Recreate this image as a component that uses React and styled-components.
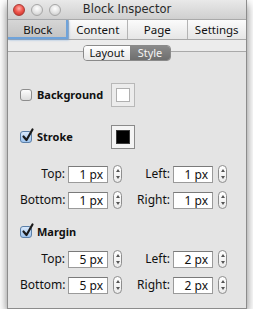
import React from "react";
import styled, { createGlobalStyle } from "styled-components";

const Global = createGlobalStyle`
  html, body {
    margin: 0;
    padding: 0;
    background: #fff;
  }
  body {
    font-family: "Noto Sans", "DejaVu Sans", sans-serif;
    color: #111;
    line-height: 1.2;
  }
`;

const Window = styled.div`
  width: 240px;
  height: 309px;
  margin-left: 7px;
  box-sizing: border-box;
  border: 1px solid #8c8c8c;
  border-top: none;
  background: #e4e4e4;
  box-shadow: 0 4px 9px rgba(0, 0, 0, 0.5);
  display: flex;
  flex-direction: column;
  overflow: hidden;
`;

const TitleBar = styled.div`
  height: 19px;
  flex: none;
  background: linear-gradient(#e9e9e9, #cfcfcf);
  display: flex;
  align-items: center;
  padding-left: 5px;
  gap: 6px;
  position: relative;
`;

const Light = styled.span`
  width: 12px;
  height: 12px;
  border-radius: 50%;
  box-sizing: border-box;
  border: 1px solid ${(p) => (p.$red ? "#a83a35" : "#a6a6a6")};
  background: ${(p) =>
    p.$red
      ? "radial-gradient(circle at 50% 35%, #ffb3ad 0%, #f0584f 45%, #c1281f 100%)"
      : "radial-gradient(circle at 50% 35%, #ffffff 0%, #e4e4e4 50%, #c2c2c2 100%)"};
`;

const Title = styled.div`
  position: absolute;
  left: 0;
  right: 0;
  top: 0;
  bottom: 0;
  display: flex;
  align-items: center;
  justify-content: center;
  font-family: "DejaVu Sans", sans-serif;
  font-size: 11.5px;
  color: #2a2a2a;
  pointer-events: none;
`;

const TabBar = styled.div`
  height: 19px;
  flex: none;
  display: grid;
  grid-template-columns: repeat(4, 1fr);
  border-top: 1px solid #a9a9a9;
  border-bottom: 1px solid #a9a9a9;
`;

const Tab = styled.div`
  display: flex;
  align-items: center;
  justify-content: center;
  font-size: 11.5px;
  color: #111;
  border-left: ${(p) => (p.$first ? "none" : "1px solid #b4b4b4")};
  background: ${(p) =>
    p.$active
      ? "linear-gradient(#d6d6d6, #c2c2c2)"
      : "linear-gradient(#fbfbfb, #e6e6e6)"};
  box-shadow: ${(p) =>
    p.$active ? "inset -2px -2px 0 #6fa3da, 1px 1px 2px rgba(90,150,220,0.6)" : "none"};
  position: relative;
  z-index: ${(p) => (p.$active ? 1 : 0)};
`;

const SegmentBar = styled.div`
  height: 24px;
  flex: none;
  display: flex;
  justify-content: center;
  align-items: flex-start;
  padding-top: 5px;
  box-sizing: border-box;
  background: linear-gradient(#ececec 0, #ececec 11px, #a9a9a9 11px, #a9a9a9 12px, #e4e4e4 12px);
`;

const Segmented = styled.div`
  display: flex;
  height: 14px;
  border: 1px solid #8a8a8a;
  border-radius: 4px;
  overflow: hidden;
`;

const Segment = styled.div`
  width: ${(p) => p.$w}px;
  display: flex;
  align-items: center;
  justify-content: center;
  font-size: 11px;
  color: ${(p) => (p.$on ? "#f4f4f4" : "#111")};
  background: ${(p) =>
    p.$on ? "linear-gradient(#8a8a8a, #6e6e6e)" : "linear-gradient(#ffffff, #e8e8e8)"};
`;

const Body = styled.div`
  padding: 19px 0 0 12px;
  display: flex;
  flex-direction: column;
`;

const CheckRow = styled.div`
  display: flex;
  align-items: center;
  height: ${(p) => p.$h || 24}px;
  margin-top: ${(p) => p.$mt || 0}px;
`;

const Box = styled.span`
  width: 12px;
  height: 12px;
  box-sizing: border-box;
  border: 1px solid #8d8d8d;
  border-radius: 3px;
  margin-right: 5px;
  position: relative;
  flex: none;
  background: ${(p) => (p.$checked ? "linear-gradient(#d8e8fb, #9ec4ee)" : "linear-gradient(#fdfdfd, #dcdcdc)")};
  border-color: ${(p) => (p.$checked ? "#5b7fa8" : "#8d8d8d")};
`;

const Tick = styled.svg`
  position: absolute;
  left: 0px;
  top: -4px;
  width: 13px;
  height: 14px;
  overflow: visible;
`;

const Bold = styled.span`
  font-weight: bold;
  font-size: 11px;
  width: ${(p) => p.$w}px;
`;

const Well = styled.span`
  width: 24px;
  height: 24px;
  box-sizing: border-box;
  border: 1px solid ${(p) => (p.$dark ? "#8a8a8a" : "#b8b8b8")};
  background: ${(p) => (p.$dark ? "#f4f4f4" : "#ececec")};
  display: flex;
  align-items: center;
  justify-content: center;
  &::after {
    content: "";
    width: 14px;
    height: 14px;
    box-sizing: border-box;
    border: 1px solid ${(p) => (p.$dark ? "#3a3a3a" : "#b0b0b0")};
    background: ${(p) => p.$fill};
  }
`;

const FieldRow = styled.div`
  display: flex;
  align-items: center;
  height: 18px;
  margin-top: ${(p) => p.$mt}px;
`;

const Pair = styled.div`
  display: flex;
  align-items: center;
  margin-left: ${(p) => p.$ml || 0}px;
`;

const Label = styled.span`
  width: ${(p) => p.$w}px;
  text-align: right;
  margin-right: 3px;
  font-size: 12px;
`;

const Field = styled.span`
  width: 40px;
  height: 17px;
  box-sizing: border-box;
  border: 1px solid #9a9a9a;
  border-top-color: #7a7a7a;
  background: #fff;
  text-align: right;
  padding-right: 4px;
  font-size: 12px;
  line-height: 15px;
  margin-right: 5px;
`;

const Stepper = styled.span`
  width: 9px;
  height: 18px;
  box-sizing: border-box;
  border: 1px solid #8e8e8e;
  border-radius: 5px;
  background: linear-gradient(#ffffff, #ebebeb);
  display: flex;
  flex-direction: column;
  align-items: center;
  justify-content: space-between;
  padding: 3px 0;
`;

const Arrow = styled.span`
  width: 0;
  height: 0;
  border-left: 2px solid transparent;
  border-right: 2px solid transparent;
  ${(p) =>
    p.$down ? "border-top: 3px solid #555;" : "border-bottom: 3px solid #555;"}
`;

function Check({ checked }) {
  return (
    <Box $checked={checked}>
      {checked && (
        <Tick viewBox="0 0 13 14">
          <path d="M2.5 8.5 L5.5 12 L11.5 1.5" fill="none" stroke="#1b1b1b" strokeWidth="2.2" strokeLinecap="round" strokeLinejoin="round" />
        </Tick>
      )}
    </Box>
  );
}

function Spin() {
  return (
    <Stepper>
      <Arrow />
      <Arrow $down />
    </Stepper>
  );
}

function Fields({ a, b, mt }) {
  return (
    <FieldRow $mt={mt}>
      <Pair>
        <Label $w={45}>{a[0]}:</Label>
        <Field>{a[1]} px</Field>
        <Spin />
      </Pair>
      <Pair $ml={9}>
        <Label $w={39}>{b[0]}:</Label>
        <Field>{b[1]} px</Field>
        <Spin />
      </Pair>
    </FieldRow>
  );
}

export default function App() {
  return (
    <>
      <Global />
      <Window>
        <TitleBar>
          <Light $red />
          <Light />
          <Light />
          <Title>Block Inspector</Title>
        </TitleBar>
        <TabBar>
          <Tab $first $active>Block</Tab>
          <Tab>Content</Tab>
          <Tab>Page</Tab>
          <Tab>Settings</Tab>
        </TabBar>
        <SegmentBar>
          <Segmented>
            <Segment $w={46}>Layout</Segment>
            <Segment $w={40} $on>Style</Segment>
          </Segmented>
        </SegmentBar>
        <Body>
          <CheckRow>
            <Check />
            <Bold $w={74}>Background</Bold>
            <Well $fill="#ffffff" />
          </CheckRow>
          <CheckRow $mt={18}>
            <Check checked />
            <Bold $w={74}>Stroke</Bold>
            <Well $dark $fill="#000000" />
          </CheckRow>
          <Fields mt={16} a={["Top", 1]} b={["Left", 1]} />
          <Fields mt={8} a={["Bottom", 1]} b={["Right", 1]} />
          <CheckRow $h={14} $mt={16}>
            <Check checked />
            <Bold>Margin</Bold>
          </CheckRow>
          <Fields mt={11} a={["Top", 5]} b={["Left", 2]} />
          <Fields mt={8} a={["Bottom", 5]} b={["Right", 2]} />
        </Body>
      </Window>
    </>
  );
}
